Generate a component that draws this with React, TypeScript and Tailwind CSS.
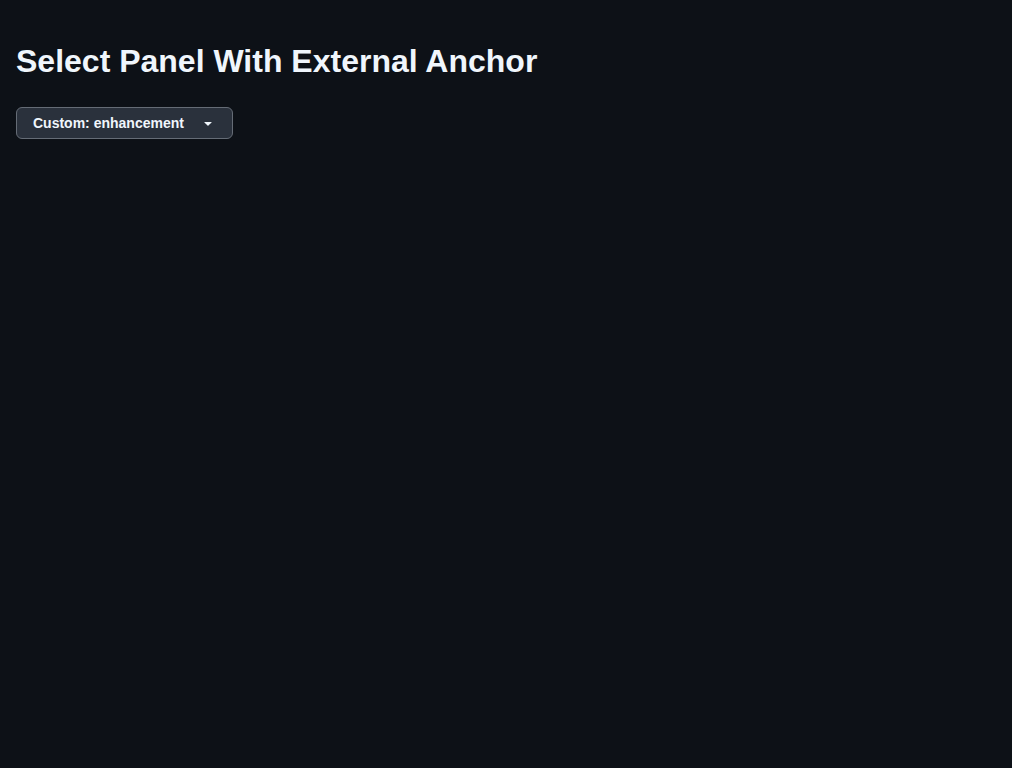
import React from 'react';

const TriangleDown = () => (
  <svg width="16" height="16" viewBox="0 0 16 16" fill="currentColor" aria-hidden="true">
    <path d="m4.427 7.427 3.396 3.396a.25.25 0 0 0 .354 0l3.396-3.396A.25.25 0 0 0 11.396 7H4.604a.25.25 0 0 0-.177.427Z" />
  </svg>
);

const App = () => {
  return (
    <div
      className="min-h-screen bg-[#0d1117] p-4 text-[#f0f6fc]"
      style={{ fontFamily: '"Liberation Sans", Arial, sans-serif' }}
    >
      <h1 className="my-[21.44px] text-[32px] font-bold leading-[48px]">
        Select Panel With External Anchor
      </h1>
      <button
        type="button"
        className="flex h-8 items-center gap-4 rounded-md border border-[#656c76] bg-[#2a313c] px-4 text-sm font-semibold text-[#f0f6fc]"
      >
        <span>Custom: enhancement</span>
        <TriangleDown />
      </button>
    </div>
  );
};

export default App;
